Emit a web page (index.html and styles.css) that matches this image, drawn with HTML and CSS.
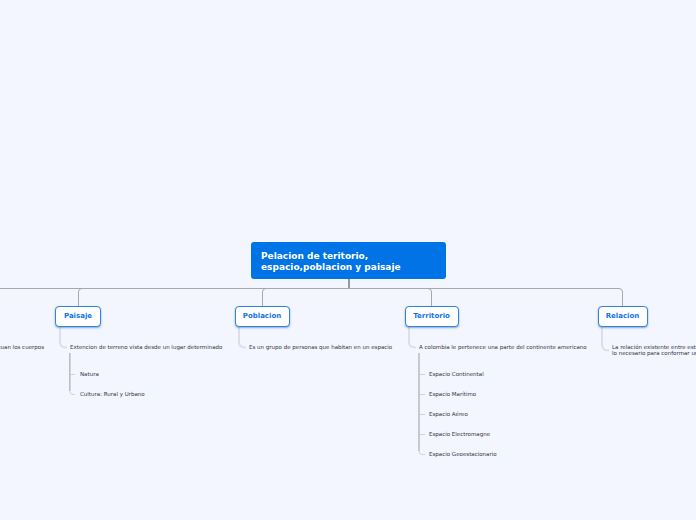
FILE: index.html
```html
<!DOCTYPE html>
<html lang="es">
<head>
<meta charset="utf-8">
<title>Pelacion de teritorio, espacio, poblacion y paisaje</title>
<link rel="stylesheet" href="styles.css">
</head>
<body>
<main class="map">
  <svg class="links" width="696" height="520" viewBox="0 0 696 520" aria-hidden="true">
    <g class="main-link">
      <path d="M0 288.5H619Q622.5 288.5 622.5 292V306"/>
      <path d="M78.5 306V292Q78.5 288.5 82 288.5"/>
      <path d="M262.5 306V292Q262.5 288.5 266 288.5"/>
      <path d="M431.5 306V292Q431.5 288.5 428 288.5"/>
      <path class="stem" d="M349 279V288"/>
    </g>
    <g class="sub-link">
      <path d="M60 326V342Q60 347.5 66 347.5H67"/>
      <path d="M239 326V342Q239 347.5 245 347.5H246"/>
      <path d="M409 326V342Q409 347.5 415 347.5H416"/>
      <path d="M602 326V344Q602 350.5 608 350.5H609"/>
    </g>
    <g class="leaf-tick">
      <path d="M69.8 391Q69.8 394.5 73 394.5H75"/>
      <path d="M69.8 374.5H75"/>
      <path d="M419 451Q419 454.5 422 454.5H425"/>
      <path d="M419 374.5H425"/>
      <path d="M419 394.5H425"/>
      <path d="M419 414.5H425"/>
      <path d="M419 434.5H425"/>
    </g>
    <g class="leaf-spine">
      <path d="M69.8 353V391"/>
      <path d="M419 353V451"/>
    </g>
  </svg>

  <h1 class="node root">Pelacion de teritorio,<br>espacio,poblacion y paisaje</h1>

  <div class="node topic topic-paisaje">Paisaje</div>
  <div class="node topic topic-poblacion">Poblacion</div>
  <div class="node topic topic-territorio">Territorio</div>
  <div class="node topic topic-relacion">Relacion</div>

  <p class="note note-espacio">Espacio donde se situan los cuerpos</p>
  <p class="note note-paisaje">Extencion de terreno vista desde un lugar determinado</p>
  <p class="note leaf-natura">Natura</p>
  <p class="note leaf-cultura">Cultura: Rural y Urbano</p>
  <p class="note note-poblacion">Es un grupo de personas que habitan en un espacio</p>
  <p class="note note-territorio">A colombia le pertenece una parte del continente americano</p>
  <p class="note leaf-e1">Espacio Continental</p>
  <p class="note leaf-e2">Espacio Marítimo</p>
  <p class="note leaf-e3">Espacio Aéreo</p>
  <p class="note leaf-e4">Espacio Electromagne</p>
  <p class="note leaf-e5">Espacio Geoestacionario</p>
  <p class="note note-relacion">La relación existente entre estos conceptos es<br>lo necesario para conformar un territorio</p>
</main>
</body>
</html>
```
FILE: styles.css
```css
html, body {
  margin: 0;
  padding: 0;
  height: 100%;
  overflow: hidden;
  background: #f3f6ff;
}

.map {
  position: relative;
  width: 696px;
  height: 520px;
  overflow: hidden;
  font-family: "DejaVu Sans", sans-serif;
}

.links {
  position: absolute;
  left: 0;
  top: 0;
}

.links path {
  fill: none;
}

.main-link path {
  stroke: #a8a8a8;
  stroke-width: 1;
}

.main-link .stem {
  stroke: #999;
  stroke-width: 2;
}

.sub-link path {
  stroke: #dcdfe8;
  stroke-width: 2;
}

.leaf-tick path {
  stroke: #d2d4dc;
  stroke-width: 1;
}

.leaf-spine path {
  stroke: #b8bac2;
  stroke-width: 1.5;
}

.node {
  position: absolute;
  box-sizing: border-box;
  margin: 0;
}

.root {
  left: 251px;
  top: 242px;
  width: 195px;
  height: 37px;
  padding: 9px 10px;
  border-radius: 3px;
  background: #0073e6;
  color: #fff;
  font-size: 9px;
  font-weight: 700;
  line-height: 11px;
}

.topic {
  top: 306px;
  height: 20.5px;
  border: 1.5px solid #2f86e0;
  border-radius: 4px;
  background: #fff;
  box-shadow: 0 1px 2px rgba(40, 90, 160, 0.5);
  color: #0f74e6;
  font-size: 7px;
  font-weight: 700;
  line-height: 19px;
  text-align: center;
}

.topic-paisaje { left: 55px; width: 46px; }
.topic-poblacion { left: 234.5px; width: 55px; }
.topic-territorio { left: 404.5px; width: 54px; }
.topic-relacion { left: 597.5px; width: 50px; }

.note {
  position: absolute;
  margin: 0;
  color: #333340;
  font-size: 5.5px;
  line-height: 6px;
  white-space: nowrap;
}

.note-espacio { right: 652px; top: 344px; }
.note-paisaje { left: 70px; top: 344px; }
.leaf-natura { left: 80px; top: 371px; }
.leaf-cultura { left: 80px; top: 391px; }
.note-poblacion { left: 249px; top: 344px; }
.note-territorio { left: 419px; top: 344px; }
.leaf-e1 { left: 429px; top: 371px; }
.leaf-e2 { left: 429px; top: 391px; }
.leaf-e3 { left: 429px; top: 411px; }
.leaf-e4 { left: 429px; top: 431px; }
.leaf-e5 { left: 429px; top: 451px; }
.note-relacion { left: 612px; top: 344px; }
```
